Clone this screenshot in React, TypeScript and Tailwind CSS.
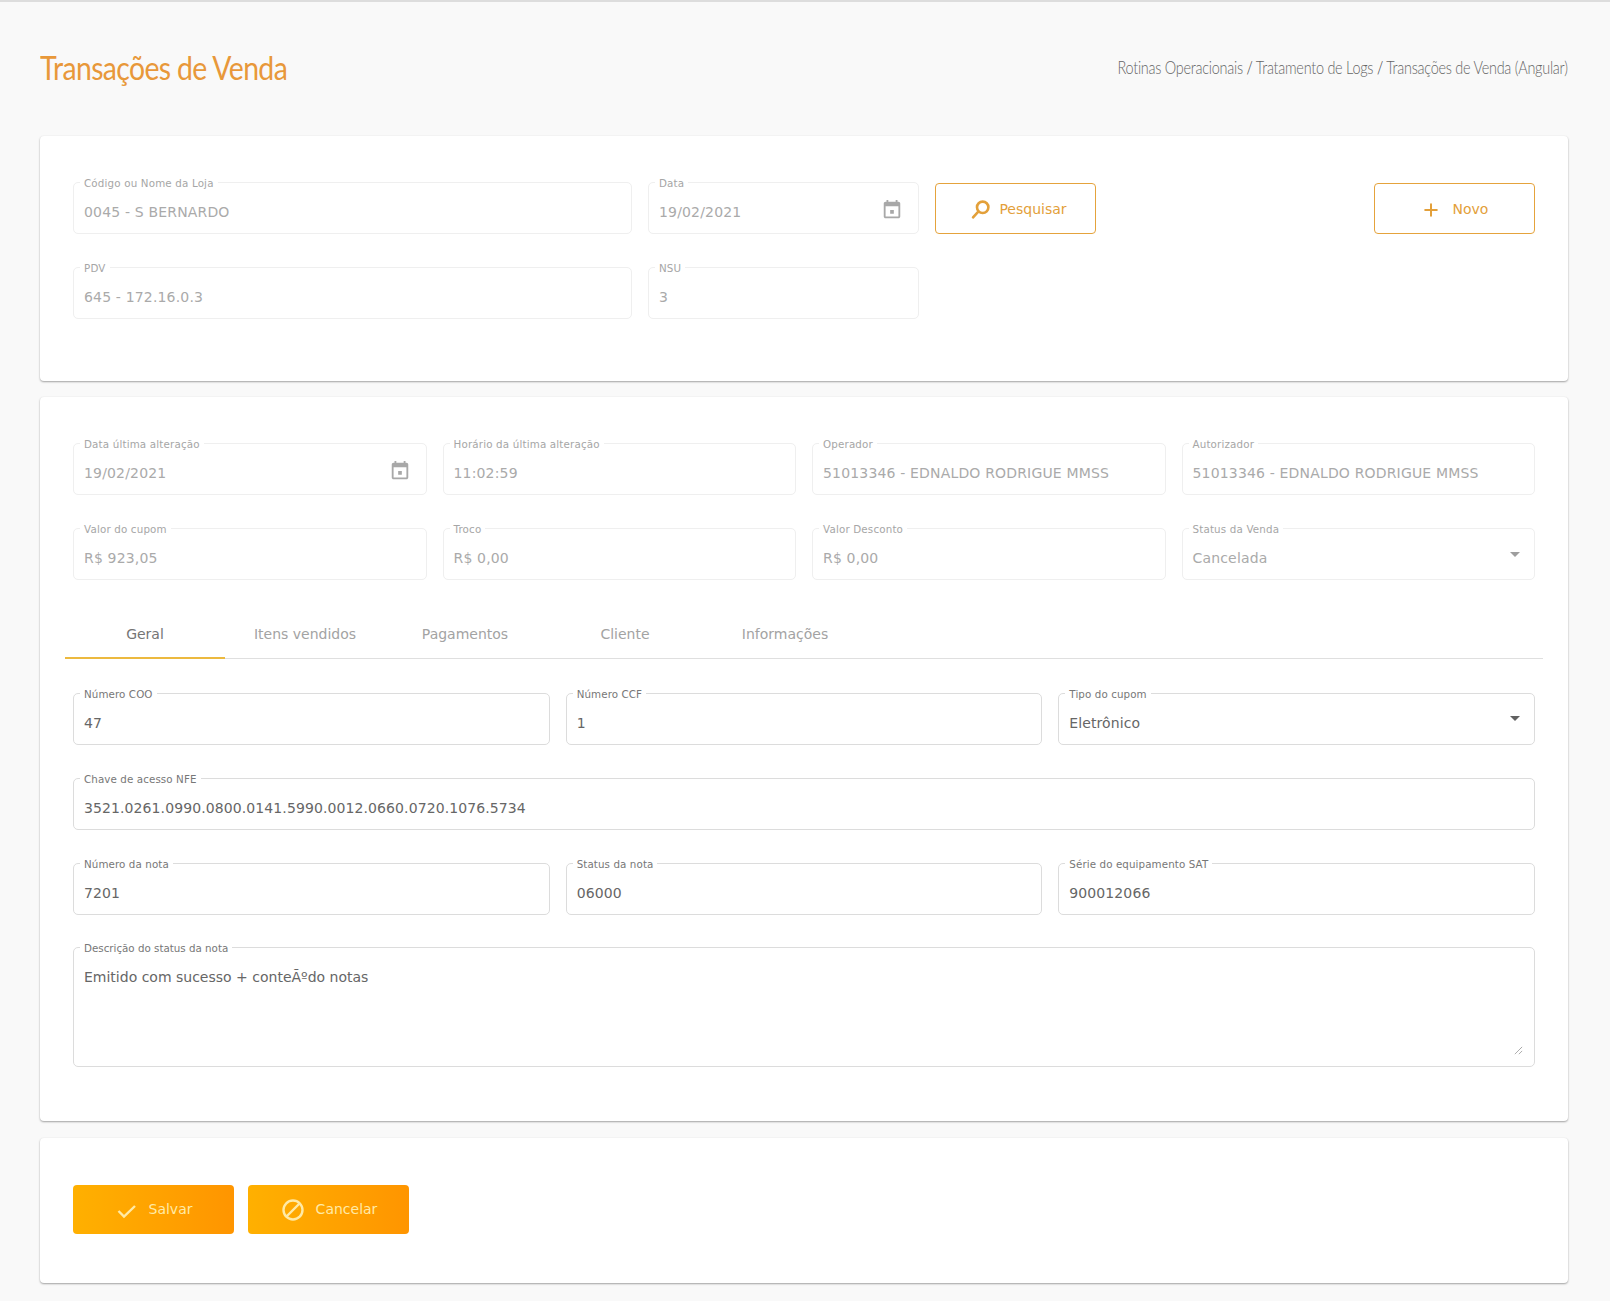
import { Plus } from "lucide-react";
import type { ReactNode } from "react";

function CalendarIcon() {
  return (
    <svg viewBox="0 0 24 24" className="absolute right-[15px] top-[16px] h-[22px] w-[22px] fill-[#a8a8a8]">
      <path d="M14 12h-4v4h4v-4zM16 1v2H8V1H6v2H5c-1.1 0-2 .9-2 2v14c0 1.1.9 2 2 2h14c1.1 0 2-.9 2-2V5c0-1.1-.9-2-2-2h-1V1h-2zm3 18H5V8h14v11z" />
    </svg>
  );
}

function Caret({ dark }: { dark?: boolean }) {
  return (
    <span
      className={`absolute right-[14px] h-0 w-0 border-x-[5px] border-t-[5px] border-x-transparent ${
        dark ? "top-[22px] border-t-[#616161]" : "top-[23px] border-t-[#9e9e9e]"
      }`}
    />
  );
}

function Field({
  label,
  value,
  disabled,
  children,
}: {
  label: string;
  value: string;
  disabled?: boolean;
  children?: ReactNode;
}) {
  return (
    <div
      className={`relative flex h-[52px] items-center rounded-[5px] border pl-[10px] text-[14px] ${
        disabled ? "border-[#efefef] tracking-[0.17px] text-[#aaaaaa]" : "border-[#dcdcdc] tracking-[0.1px] text-[#666666]"
      }`}
    >
      <label
        className={`absolute left-[6px] top-[-5px] bg-white px-[4px] text-[10.3px] leading-[11px] ${
          disabled ? "text-[#a6a6a6]" : "text-[#777777]"
        }`}
      >
        {label}
      </label>
      <span className="pt-[8px]">{value}</span>
      {children}
    </div>
  );
}

function Card({ className, children }: { className: string; children: ReactNode }) {
  return (
    <section className={`rounded-[4px] bg-white px-[33px] shadow-[0_1px_2px_rgba(0,0,0,0.35),0_0_2px_rgba(0,0,0,0.04)] ${className}`}>
      {children}
    </section>
  );
}

function OutlineButton({ icon, text, className }: { icon: ReactNode; text: string; className?: string }) {
  return (
    <button
      className={`mt-[1px] flex h-[51px] w-[161px] items-center justify-center gap-[8px] rounded-[4px] border border-[#e5a33c] bg-white pt-[2px] text-[14px] text-[#e3a03a] ${className ?? ""}`}
    >
      {icon}
      {text}
    </button>
  );
}

function SolidButton({ icon, text }: { icon: ReactNode; text: string }) {
  return (
    <button className="flex h-[49px] w-[161px] items-center justify-center gap-[12px] rounded-[4px] bg-gradient-to-r from-[#ffb000] to-[#ff9500] pl-[2px] text-[14px] text-[#ffeaa6]">
      {icon}
      {text}
    </button>
  );
}

const tabs = ["Geral", "Itens vendidos", "Pagamentos", "Cliente", "Informações"];

export default function App() {
  return (
    <div className="min-h-[1301px] border-t-2 border-[#dddddd] bg-[#f9f9f9] pl-[40px] pr-[42px] font-['DejaVu_Sans',sans-serif]">
      <header className="flex h-[134px] items-center justify-between pb-[2px]">
        <h1 className="origin-left scale-x-[0.86] font-['Lato',sans-serif] text-[33px] font-normal tracking-[-0.73px] text-[#e8983a]">
          Transações de Venda
        </h1>
        <nav className="origin-right scale-x-[0.85] font-['Lato',sans-serif] text-[17px] font-light tracking-[-0.3px] text-[#666666]">
          Rotinas Operacionais <span className="text-[#333333]">/</span> Tratamento de Logs{" "}
          <span className="text-[#333333]">/</span> Transações de Venda (Angular)
        </nav>
      </header>

      <Card className="h-[245px] pt-[46px]">
        <div className="grid grid-cols-[559px_271px_160px_1fr_161px] gap-x-[16px] gap-y-[33px]">
          <Field disabled label="Código ou Nome da Loja" value="0045 - S BERNARDO" />
          <Field disabled label="Data" value="19/02/2021">
            <CalendarIcon />
          </Field>
          <OutlineButton
            className="pl-[6px]"
            icon={
              <svg viewBox="0 0 24 24" className="h-[21px] w-[21px] fill-none stroke-[#e3a03a] stroke-[3]">
                <circle cx="14.5" cy="9.5" r="6.5" />
                <path d="M9.5 14.5 3.5 21" strokeLinecap="round" />
              </svg>
            }
            text="Pesquisar"
          />
          <div />
          <OutlineButton icon={<Plus size={20} strokeWidth={2.4} className="mr-[4px]" />} text="Novo" />
          <Field disabled label="PDV" value="645 - 172.16.0.3" />
          <Field disabled label="NSU" value="3" />
        </div>
      </Card>

      <Card className="mt-[16px] h-[724px] pt-[46px]">
        <div className="grid grid-cols-4 gap-x-[16px] gap-y-[33px]">
          <Field disabled label="Data última alteração" value="19/02/2021">
            <CalendarIcon />
          </Field>
          <Field disabled label="Horário da última alteração" value="11:02:59" />
          <Field disabled label="Operador" value="51013346 - EDNALDO RODRIGUE MMSS" />
          <Field disabled label="Autorizador" value="51013346 - EDNALDO RODRIGUE MMSS" />
          <Field disabled label="Valor do cupom" value="R$ 923,05" />
          <Field disabled label="Troco" value="R$ 0,00" />
          <Field disabled label="Valor Desconto" value="R$ 0,00" />
          <Field disabled label="Status da Venda" value="Cancelada">
            <Caret />
          </Field>
        </div>

        <div className="mx-[-8px] mt-[31px] flex h-[48px] border-b border-[#dfdfdf] text-[14px]">
          {tabs.map((tab, i) => (
            <div
              key={tab}
              className={`mb-[-1px] flex w-[160px] items-center justify-center border-b-2 ${
                i === 0 ? "border-[#ecb93f] text-[#757575]" : "border-transparent text-[#a3a3a3]"
              }`}
            >
              {tab}
            </div>
          ))}
        </div>

        <div className="mt-[34px] grid grid-cols-3 gap-x-[16px] gap-y-[33px]">
          <Field label="Número COO" value="47" />
          <Field label="Número CCF" value="1" />
          <Field label="Tipo do cupom" value="Eletrônico">
            <Caret dark />
          </Field>
          <div className="col-span-3">
            <Field label="Chave de acesso NFE" value="3521.0261.0990.0800.0141.5990.0012.0660.0720.1076.5734" />
          </div>
          <Field label="Número da nota" value="7201" />
          <Field label="Status da nota" value="06000" />
          <Field label="Série do equipamento SAT" value="900012066" />
          <div className="relative col-span-3 mt-[-1px] h-[120px] rounded-[5px] border border-[#dcdcdc] pl-[10px] pt-[19px] text-[14px] text-[#666666]">
            <label className="absolute left-[6px] top-[-5px] bg-white px-[4px] text-[10.3px] leading-[11px] text-[#777777]">
              Descrição do status da nota
            </label>
            Emitido com sucesso + conteÃºdo notas
            <svg viewBox="0 0 10 10" className="absolute bottom-[11px] right-[11px] h-[9px] w-[9px] stroke-[#666666]">
              <path d="M1 9 9 1M5.5 9 9 5.5" strokeWidth="1" strokeDasharray="1 0.6" />
            </svg>
          </div>
        </div>
      </Card>

      <Card className="mt-[17px] h-[145px] pt-[47px]">
        <div className="flex gap-[14px]">
          <SolidButton
            icon={
              <svg viewBox="0 0 20 20" className="h-[20px] w-[20px] fill-none stroke-[#ffeaa6] stroke-[2.4]">
                <path d="M1.5 11 7 16.5 18 6" />
              </svg>
            }
            text="Salvar"
          />
          <SolidButton
            icon={
              <svg viewBox="0 0 22 22" className="h-[22px] w-[22px] fill-none stroke-[#ffeaa6] stroke-[2.4]">
                <circle cx="11" cy="11" r="9.5" />
                <path d="M4.5 17.5 17.5 4.5" />
              </svg>
            }
            text="Cancelar"
          />
        </div>
      </Card>
    </div>
  );
}
